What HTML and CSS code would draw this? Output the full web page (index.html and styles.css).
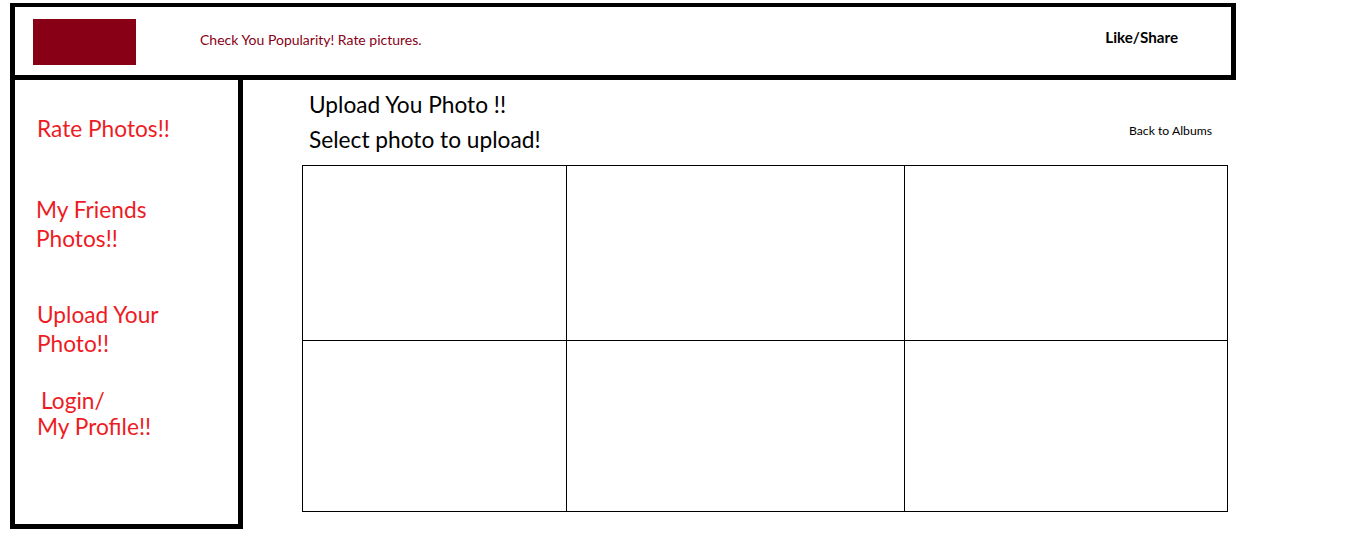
FILE: index.html
```html
<!DOCTYPE html>
<html>
<head>
<meta charset="utf-8">
<title>Check You Popularity</title>
<link rel="stylesheet" href="styles.css">
</head>
<body>
<div class="page">
  <header class="topbar">
    <div class="logo"></div>
    <div class="tagline">Check You Popularity! Rate pictures.</div>
    <div class="share">Like/Share</div>
  </header>
  <div class="body-row">
    <nav class="sidebar">
      <div class="nav-item nav-rate">Rate Photos!!</div>
      <div class="nav-item nav-friends">My Friends<br>Photos!!</div>
      <div class="nav-item nav-upload">Upload Your<br>Photo!!</div>
      <div class="nav-item nav-login"><span class="indent">Login/</span><br>My Profile!!</div>
    </nav>
    <main class="main">
      <div class="heading">Upload You Photo !!</div>
      <div class="subrow">
        <div class="heading">Select photo to upload!</div>
        <div class="back">Back to Albums</div>
      </div>
      <div class="grid">
        <div class="cell"></div>
        <div class="cell"></div>
        <div class="cell"></div>
        <div class="cell"></div>
        <div class="cell"></div>
        <div class="cell"></div>
      </div>
    </main>
  </div>
</div>
</body>
</html>
```

FILE: styles.css
```css
* { box-sizing: border-box; }
body {
  margin: 0;
  background: #fff;
  font-family: "Lato", "Open Sans", sans-serif;
}
.page {
  padding: 3px 0 0 10px;
}
.topbar {
  width: 1226px;
  height: 77px;
  border: 5px solid #000;
  border-top-width: 4px;
  display: flex;
  align-items: flex-start;
}
.logo {
  width: 103px;
  height: 46px;
  margin: 12px 0 0 18px;
  background: #880015;
  flex: none;
}
.tagline {
  margin: 24px 0 0 64px;
  font-size: 14px;
  line-height: 17px;
  color: #880015;
  white-space: nowrap;
}
.share {
  margin: 21px 53px 0 auto;
  font-size: 15.2px;
  line-height: 18px;
  font-weight: 700;
  color: #000;
  white-space: nowrap;
}
.body-row {
  display: flex;
  align-items: flex-start;
}
.sidebar {
  width: 233px;
  height: 449px;
  border: 5px solid #000;
  border-top: 0;
  padding-left: 21px;
  flex: none;
}
.nav-item {
  color: #ed1c24;
  font-size: 22.7px;
  line-height: 29px;
  white-space: nowrap;
}
.nav-rate { margin-top: 34px; padding-left: 1px; }
.nav-friends { margin-top: 52px; }
.nav-upload { margin-top: 47px; padding-left: 1px; }
.nav-login { margin-top: 30px; line-height: 26px; padding-left: 1px; }
.indent { padding-left: 4px; }
.main {
  margin-left: 59px;
  width: 926px;
  padding-top: 8px;
}
.heading {
  font-size: 22.7px;
  line-height: 33px;
  color: #000;
  padding-left: 7px;
  white-space: nowrap;
}
.subrow {
  margin-top: 2px;
  display: flex;
  justify-content: space-between;
  align-items: flex-start;
}
.back {
  margin: 0 16px 0 0;
  font-size: 12.2px;
  line-height: 15px;
  color: #000;
}
.grid {
  margin-top: 9px;
  display: grid;
  grid-template-columns: 264px 338px 323px;
  grid-template-rows: 175px 171px;
  border-top: 1px solid #000;
  border-left: 1px solid #000;
  width: 926px;
}
.cell {
  border-right: 1px solid #000;
  border-bottom: 1px solid #000;
}
```
